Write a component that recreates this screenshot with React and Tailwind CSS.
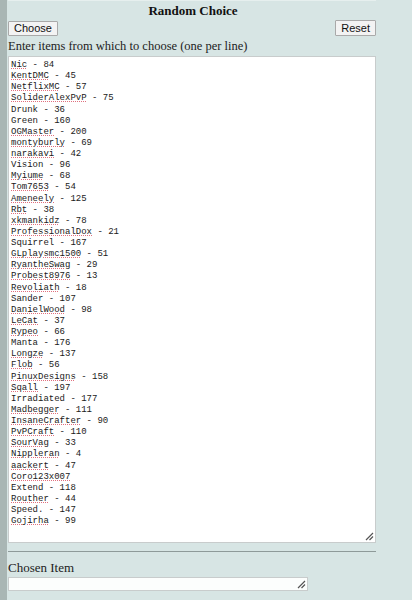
import React from "react";

const items = [
  ["Nic", "84", true],
  ["KentDMC", "45", true],
  ["NetflixMC", "57", true],
  ["SoliderAlexPvP", "75", true],
  ["Drunk", "36", false],
  ["Green", "160", false],
  ["OGMaster", "200", true],
  ["montyburly", "69", true],
  ["narakavi", "42", true],
  ["Vision", "96", false],
  ["Myiume", "68", true],
  ["Tom7653", "54", true],
  ["Ameneely", "125", true],
  ["Rbt", "38", true],
  ["xkmankidz", "78", true],
  ["ProfessionalDox", "21", true],
  ["Squirrel", "167", false],
  ["GLplaysmc1500", "51", true],
  ["RyantheSwag", "29", true],
  ["Probest8976", "13", true],
  ["Revoliath", "18", true],
  ["Sander", "107", false],
  ["DanielWood", "98", true],
  ["LeCat", "37", true],
  ["Rypeo", "66", true],
  ["Manta", "176", false],
  ["Longze", "137", true],
  ["Flob", "56", true],
  ["PinuxDesigns", "158", true],
  ["Sqall", "197", true],
  ["Irradiated", "177", false],
  ["Madbegger", "111", true],
  ["InsaneCrafter", "90", true],
  ["PvPCraft", "110", true],
  ["SourVag", "33", true],
  ["Nippleran", "4", true],
  ["aackert", "47", true],
  ["Coro123x007", null, true],
  ["Extend", "118", false],
  ["Routher", "44", true],
  ["Speed.", "147", false],
  ["Gojirha", "99", true],
];

function Grip({ className }) {
  return (
    <svg className={className} width="9" height="9" viewBox="0 0 9 9">
      <path d="M8 1 L1 8 M8 4.5 L4.5 8" stroke="#555" strokeWidth="1.2" fill="none" />
    </svg>
  );
}

export default function App() {
  const serif = { fontFamily: '"Liberation Serif", "Times New Roman", serif' };
  return (
    <div className="flex w-[412px] h-[600px] bg-[#d7e5e4] overflow-hidden">
      <div className="w-[7px] shrink-0 bg-[#a9b6b4]" />
      <div className="flex flex-col w-[368px] ml-[1px] border-t border-[#e6efee]" style={serif}>
        <div className="text-center font-bold text-[13px] leading-[15px] text-[#111] pt-[2px] pl-[2px]">
          Random Choice
        </div>
        <div className="flex justify-between items-center mt-[2px]">
          <button
            className="h-[15px] px-[5px] bg-[#f3f3f3] border border-[#a9a9a9] text-[11px] leading-[13px] text-[#111] rounded-[1px]"
            style={{ fontFamily: '"Liberation Sans", Arial, sans-serif' }}
          >
            Choose
          </button>
          <button
            className="h-[16px] px-[5px] bg-[#f3f3f3] border border-[#a9a9a9] text-[11px] leading-[14px] text-[#111] rounded-[1px]"
            style={{ fontFamily: '"Liberation Sans", Arial, sans-serif' }}
          >
            Reset
          </button>
        </div>
        <div className="text-[12.5px] leading-[15px] text-[#222] mt-[3px]">
          Enter items from which to choose (one per line)
        </div>
        <div className="relative mt-[2px] h-[487px] bg-white border border-[#c8cccc] pl-[2px] pt-[3px]">
          <div
            className="text-[9px] leading-[11.12px] text-[#1a1a1a] whitespace-pre"
            style={{ fontFamily: '"Liberation Mono", "DejaVu Sans Mono", monospace' }}
          >
            {items.map(([n, v, u], i) => (
              <div key={i}>
                <span
                  className={
                    u
                      ? "underline decoration-dotted decoration-[#e0707e] decoration-[1px] underline-offset-[1px]"
                      : ""
                  }
                >
                  {n}
                </span>
                {v !== null ? ` - ${v}` : ""}
              </div>
            ))}
          </div>
          <Grip className="absolute right-[1px] bottom-[1px]" />
        </div>
        <div className="mt-[8px] h-0 border-t border-[#8e9a99]" />
        <div className="text-[13px] leading-[15px] text-[#222] mt-[8px]">Chosen Item</div>
        <div className="relative mt-[2px] w-[300px] h-[14px] bg-[#fcfefd] border border-[#c8cccc]">
          <Grip className="absolute right-[1px] bottom-[1px]" />
        </div>
      </div>
    </div>
  );
}
